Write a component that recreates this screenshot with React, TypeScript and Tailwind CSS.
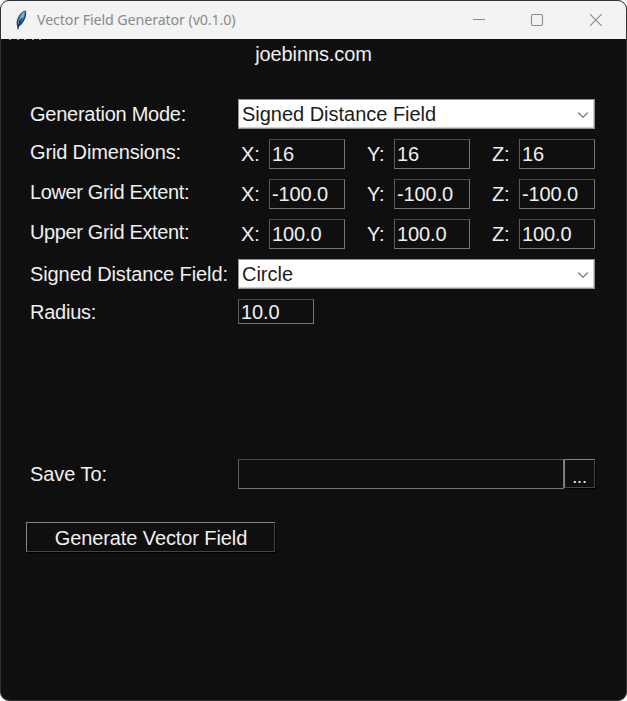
import React from "react";

function Label({ children, className = "" }: { children: string; className?: string }) {
  return <div className={`w-[208px] shrink-0 whitespace-pre leading-[24px] ${className}`}>{children}</div>;
}

function Combo({ value }: { value: string }) {
  return (
    <div className="flex h-[30px] w-[357px] items-center justify-between border border-[#8f8f8f] bg-white pl-[3px] pr-[5px] text-[#1c1c1c] shadow-[inset_-1px_-1px_0_#d0d0d0]">
      <span className="tracking-[-0.02px]">{value}</span>
      <svg className="mt-[2px] h-[8px] w-[12px]" viewBox="0 0 12 8" fill="none" stroke="#858585" strokeWidth="1.4">
        <path d="M1.2 1.5 6 6.2 10.8 1.5" />
      </svg>
    </div>
  );
}

const entry =
  "flex items-center border border-t-[#4c4c4c] border-l-[#5c5c5c] border-r-[#777] border-b-[#777] pl-[2px] tracking-[-0.1px]";

function Vector({ values }: { values: string[] }) {
  return (
    <div className="flex gap-[18px]">
      {["X:", "Y:", "Z:"].map((axis, i) => (
        <div key={axis} className="flex h-[30px] items-center">
          <span className={`w-[31px] ${i === 0 ? "pl-[3px]" : "pl-[4px]"}`}>{axis}</span>
          <div className={`${entry} h-[30px] w-[76px]`}>{values[i]}</div>
        </div>
      ))}
    </div>
  );
}

function Row({ label, labelClass, children }: { label: string; labelClass?: string; children: React.ReactNode }) {
  return (
    <div className="flex h-[30px] items-start">
      <Label className={labelClass}>{label}</Label>
      {children}
    </div>
  );
}

function TitleBar() {
  return (
    <div className="flex h-[38px] items-center bg-[#f3f3f3] font-['Noto_Sans','Open_Sans',sans-serif] text-[#8b8b8b]">
      <svg className="ml-[14px] h-[20px] w-[12px]" viewBox="0 0 12 20">
        <path d="M10.9.4C8.2.4 5 3.5 3.2 7 1.6 10 1.2 13 1.9 15.3L2.8 19.5 4 16.5C9.2 13.2 12.2 5.5 10.9.4Z" fill="#34414f" />
        <path d="M10.2 1.2C7.6 1.8 4.9 5 3.6 8.3 2.6 10.8 2.5 13 3.2 15 7.2 12 10.6 6 10.2 1.2Z" fill="#4683c8" />
        <path d="M9.4 1.9C7.7 3 5.7 5.7 4.8 8.4L8.3 7.2Z" fill="#86b3e4" />
        <path d="M6.8 8.4C5.6 10.8 4 14 2.8 19.3M5 10.4 4.6 12.2 6 11.2" fill="none" stroke="#17222d" strokeWidth=".8" />
      </svg>
      <span className="ml-[10px] text-[14.3px] tracking-[-0.13px]">Vector Field Generator (v0.1.0)</span>
      <svg className="ml-auto mr-[23px] h-[14px] w-[131px]" viewBox="0 0 131 14" fill="none" stroke="#8b8b8b" strokeWidth="1.1">
        <path d="M1 6.5H13M118 1.2 129.6 12.8M129.6 1.2 118 12.8" />
        <rect x="59.5" y="1.5" width="11" height="11" rx="1.5" />
      </svg>
    </div>
  );
}

export default function App() {
  return (
    <div className="h-[701px] w-[627px] bg-white">
      <main className="flex h-full flex-col overflow-hidden rounded-[9px] border border-[#333] bg-[#0f0f0f] font-['Liberation_Sans',Arial,sans-serif] text-[20px] leading-[24px] text-[#f0f0f0]">
        <TitleBar />
        <div className="flex h-[3px] items-start gap-[5.5px] pl-[8px]">
          {[0, 1, 2, 3, 4].map((i) => (
            <i key={i} className="h-px w-[2px] bg-[#a09a90]" />
          ))}
        </div>
        <div className="h-[57px] text-center text-[20px] tracking-[-0.1px]">joebinns.com</div>
        <section className="flex flex-col gap-[10px] pl-[29px] tracking-[-0.15px]">
          <Row label="Generation Mode:" labelClass="pt-[3px] tracking-[-0.26px]">
            <Combo value="Signed Distance Field" />
          </Row>
          <Row label="Grid Dimensions:" labelClass="pt-[1px]">
            <Vector values={["16", "16", "16"]} />
          </Row>
          <Row label="Lower Grid Extent:" labelClass="pt-[1px] tracking-[-0.36px]">
            <Vector values={["-100.0", "-100.0", "-100.0"]} />
          </Row>
          <Row label="Upper Grid Extent:" labelClass="pt-[1px] tracking-[-0.36px]">
            <Vector values={["100.0", "100.0", "100.0"]} />
          </Row>
          <Row label="Signed Distance Field:" labelClass="pt-[3px] tracking-[-0.1px]">
            <Combo value="Circle" />
          </Row>
          <Row label="Radius:" labelClass="pt-[1px] tracking-[-0.25px]">
            <div className={`${entry} h-[25px] w-[76px]`}>10.0</div>
          </Row>
        </section>
        <section className="mt-[130px] pl-[29px] tracking-[-0.15px]">
          <Row label="Save To:" labelClass="pt-[3px] tracking-[-0.05px]">
            <div className={`${entry} h-[30px] w-[326px]`} />
            <button className="flex h-[29px] w-[31px] items-center justify-center border border-t-[#858585] border-l-[#858585] border-r-[#444] border-b-[#444] pt-[7px] text-[18px] shadow-[1px_1px_0_#000]">
              ...
            </button>
          </Row>
        </section>
        <button className="ml-[25px] mt-[33px] h-[30px] w-[249px] border border-t-[#858585] border-l-[#858585] border-r-[#444] border-b-[#444] pl-px pt-px tracking-[-0.1px] shadow-[1px_1px_0_#000]">
          Generate Vector Field
        </button>
      </main>
    </div>
  );
}
